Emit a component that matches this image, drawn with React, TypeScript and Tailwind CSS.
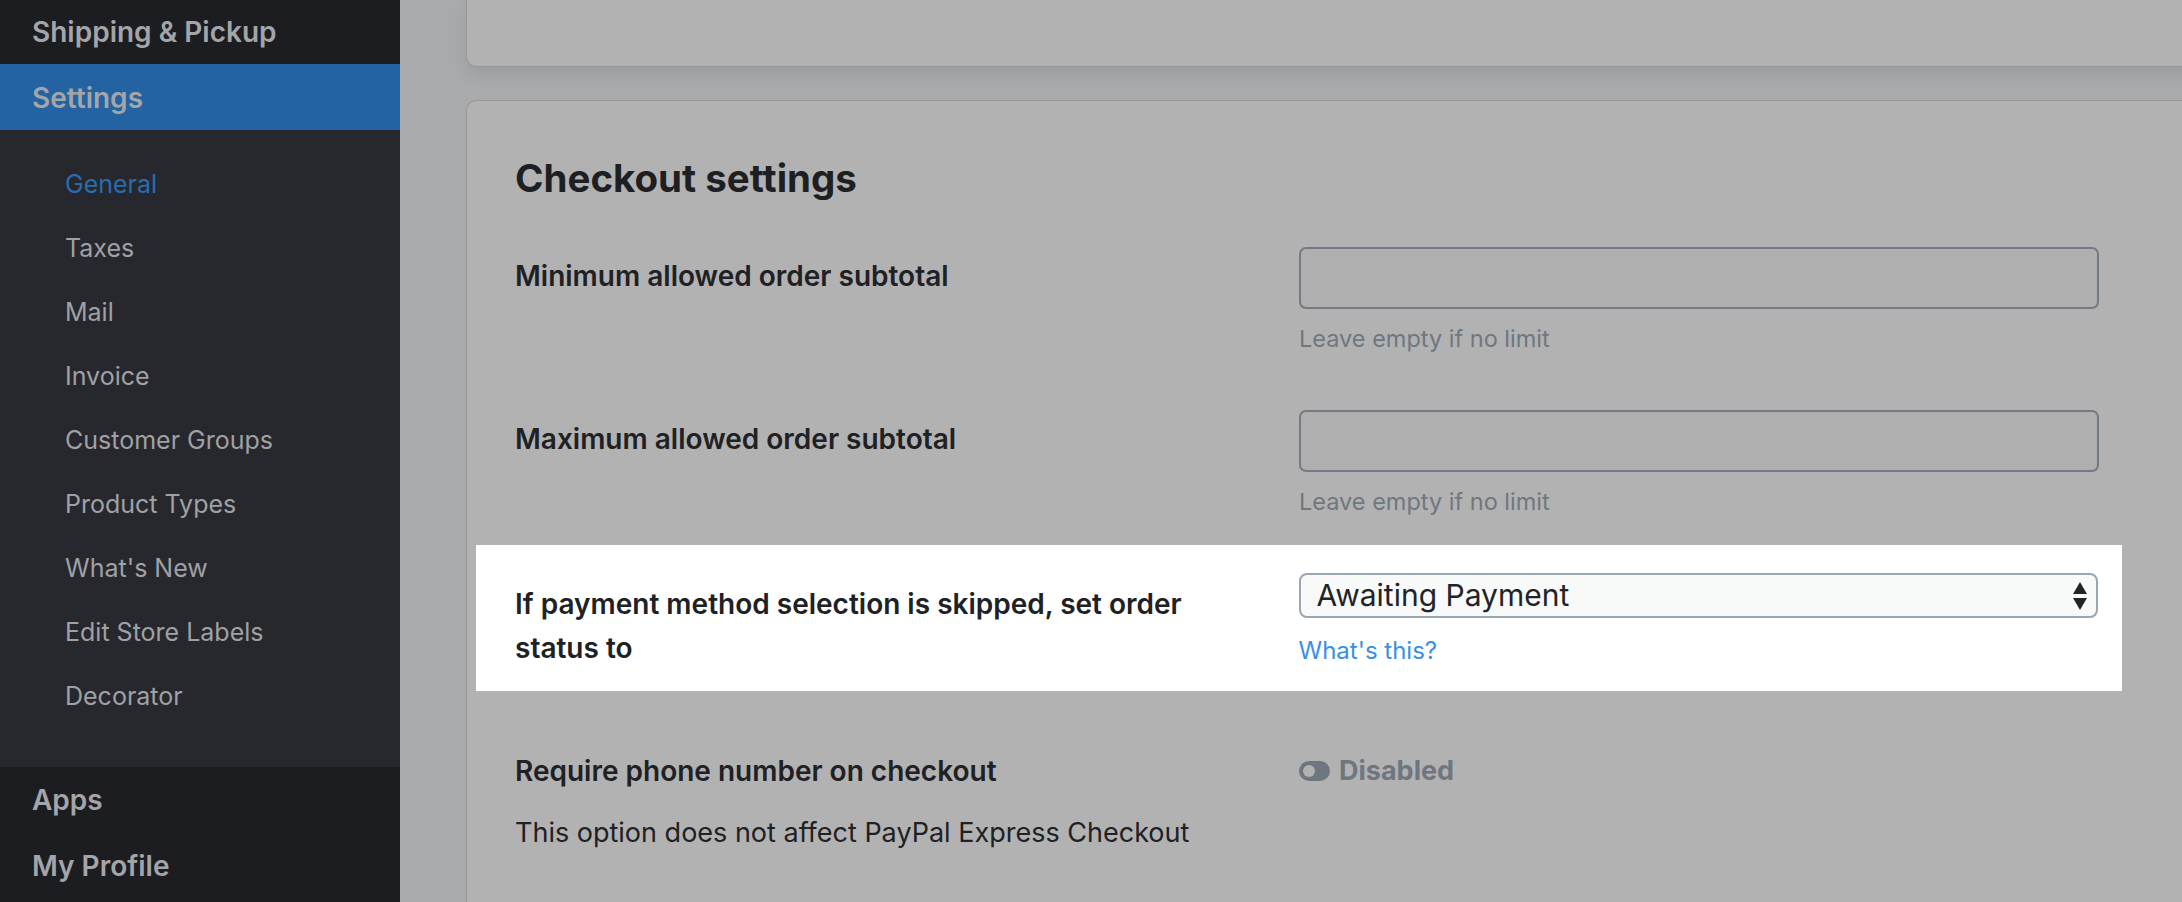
import React from 'react';

const subItems = [
  'General',
  'Taxes',
  'Mail',
  'Invoice',
  'Customer Groups',
  'Product Types',
  "What's New",
  'Edit Store Labels',
  'Decorator',
];

const font = { fontFamily: 'Inter, "Noto Sans", sans-serif' };

const Sidebar: React.FC = () => (
  <aside className="w-[400px] shrink-0 flex flex-col bg-[#1c1d21] text-[#a3a5a9]">
    <div className="h-[64px] flex items-center pl-[32px] text-[28px] font-semibold">Shipping &amp; Pickup</div>
    <div className="h-[66px] flex items-center pl-[32px] pt-[2px] text-[28px] font-semibold bg-[#2463a1]">Settings</div>
    <div className="bg-[#27282d] pt-[23px] pb-[38px]">
      {subItems.map((item, i) => (
        <div
          key={item}
          className={`h-[64px] flex items-center pl-[65px] text-[25px] ${i === 0 ? 'text-[#2a6cb0]' : 'text-[#9fa1a5]'}`}
        >
          {item}
        </div>
      ))}
    </div>
    <div className="h-[66px] flex items-center pl-[32px] text-[28px] font-semibold">Apps</div>
    <div className="h-[66px] flex items-center pl-[32px] text-[28px] font-semibold">My Profile</div>
  </aside>
);

const TextRow: React.FC<{ label: string; top: string }> = ({ label, top }) => (
  <div className={`flex pl-[39px] pr-[24px] ${top}`}>
    <div className="w-[784px] pt-[11px] text-[28px] leading-[36px] font-semibold text-[#202124]">{label}</div>
    <div className="w-[800px]">
      <div className="h-[62px] rounded-[7px] border-2 border-[#727b84] bg-[#aeafae]" />
      <div className="mt-[15px] text-[23.5px] leading-[30px] text-[#6f7780]">Leave empty if no limit</div>
    </div>
  </div>
);

export default function App() {
  return (
    <div className="flex h-[902px] w-[2182px] overflow-hidden" style={font}>
      <Sidebar />
      <main className="flex-1 bg-[#a9aaac] pl-[66px] overflow-hidden">
        {/* card above, mostly scrolled away */}
        <div className="w-[1760px] h-[67px] bg-[#b2b2b2] rounded-bl-[10px] border-l border-b border-[#95979a] shadow-[0_8px_16px_rgba(0,0,0,0.08)]" />
        <div className="mt-[33px] w-[1760px] h-[820px] bg-[#b2b2b2] rounded-tl-[10px] border-l border-t border-[#95979a] px-[9px]">
          <h2 className="pl-[39px] pt-[55px] text-[38.5px] leading-[44px] font-bold text-[#1e1f22]">Checkout settings</h2>

          <TextRow label="Minimum allowed order subtotal" top="mt-[47px]" />
          <TextRow label="Maximum allowed order subtotal" top="mt-[56px]" />

          <div className="mt-[28px] flex bg-white pl-[39px] pr-[24px] pt-[28px] pb-[21px] w-[1646px]">
            <div className="w-[784px] pr-[64px]">
              <div className="pt-[9px] text-[28px] leading-[44px] font-semibold text-[#202124]">
                If payment method selection is skipped, set order status to
              </div>
            </div>
            <div className="w-[800px]">
              <div className="h-[45px] flex items-center justify-between rounded-[8px] border-2 border-[#9aa6b2] bg-[#f8f9f9] pl-[16px] pr-[8px]">
                <span className="text-[30px] text-[#222326]">Awaiting Payment</span>
                <svg width="16" height="30" viewBox="0 0 16 30" className="text-[#222326]">
                  <path d="M8 1 L15 13 L1 13 Z" fill="currentColor" />
                  <path d="M1 17 L15 17 L8 29 Z" fill="currentColor" />
                </svg>
              </div>
              <div className="mt-[18px] text-[24px] leading-[30px] text-[#3b8fe3]">What's this?</div>
            </div>
          </div>

          <div className="flex pl-[39px] pr-[24px] mt-[62px]">
            <div className="w-[784px]">
              <div className="text-[28px] leading-[36px] font-semibold text-[#202124]">Require phone number on checkout</div>
              <div className="mt-[26px] text-[27px] leading-[36px] text-[#202124]">This option does not affect PayPal Express Checkout</div>
            </div>
            <div className="w-[800px] h-[36px] flex items-center gap-[9px]">
              <span className="relative w-[31px] h-[20px] rounded-full bg-[#6e7780]">
                <span className="absolute left-[4px] top-[4px] w-[12px] h-[12px] rounded-full bg-[#b2b2b2]" />
              </span>
              <span className="text-[27px] font-bold text-[#6e7780]">Disabled</span>
            </div>
          </div>
        </div>
      </main>
    </div>
  );
}
